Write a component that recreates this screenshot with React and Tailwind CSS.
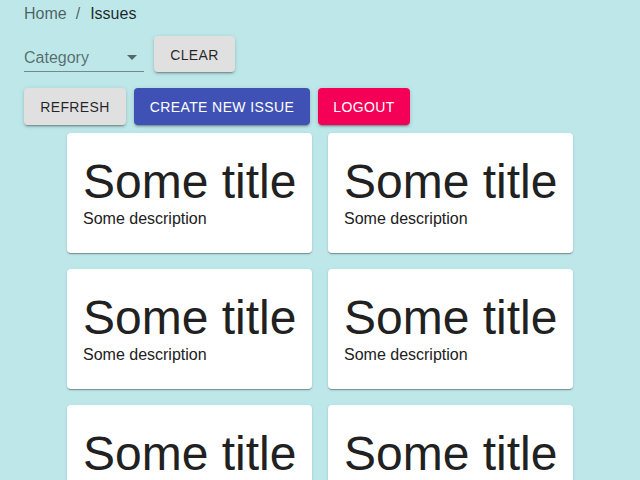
import React from "react";

const cards = [1, 2, 3, 4, 5, 6];

const btnBase =
  "h-[37px] rounded text-sm font-normal uppercase tracking-[0.4px] shadow-[0px_3px_1px_-2px_rgba(0,0,0,0.2),0px_2px_2px_0px_rgba(0,0,0,0.14),0px_1px_5px_0px_rgba(0,0,0,0.12)]";

const App = () => {
  return (
    <div className="h-screen w-full bg-[#bde7e9] font-['Liberation_Sans',Arial,sans-serif] overflow-hidden">
      <div className="px-6">
        <div className="pt-[2px] flex items-center text-base leading-6">
          <span className="text-black/60">Home</span>
          <span className="text-black/60 ml-[9px] mr-[10px]">/</span>
          <span className="text-black/85">Issues</span>
        </div>

        <div className="mt-[10px] flex items-end gap-[10px]">
          <div className="relative w-[120px] h-[29px] flex items-center pt-[2px] border-b border-black/40">
            <span className="text-base leading-6 text-black/55">Category</span>
            <svg className="absolute right-0 top-[2px] text-black/55" width="24" height="24" viewBox="0 0 24 24">
              <path d="M7 10l5 5 5-5z" fill="currentColor" />
            </svg>
          </div>
          <button className={`${btnBase} !h-9 w-[81px] pt-px bg-[#e0e0e0] text-black/85`}>
            Clear
          </button>
        </div>

        <div className="mt-4 flex items-center gap-2">
          <button className={`${btnBase} w-[102px] bg-[#e0e0e0] text-black/85`}>
            Refresh
          </button>
          <button className={`${btnBase} w-[176px] bg-[#3f51b5] text-white`}>
            Create new issue
          </button>
          <button className={`${btnBase} w-[92px] bg-[#f50057] text-white`}>
            Logout
          </button>
        </div>
      </div>

      <div className="mt-2 mx-auto w-[506px] grid grid-cols-2 gap-4">
        {cards.map((c) => (
          <div
            key={c}
            className="bg-white rounded px-4 pt-4 pb-[22px] text-[#212121] shadow-[0px_2px_1px_-1px_rgba(0,0,0,0.2),0px_1px_1px_0px_rgba(0,0,0,0.14),0px_1px_3px_0px_rgba(0,0,0,0.12)]"
          >
            <h3 className="mt-2 text-[48px] leading-[50px] whitespace-nowrap">Some title</h3>
            <p className="text-base leading-6">Some description</p>
          </div>
        ))}
      </div>
    </div>
  );
};

export default App;
